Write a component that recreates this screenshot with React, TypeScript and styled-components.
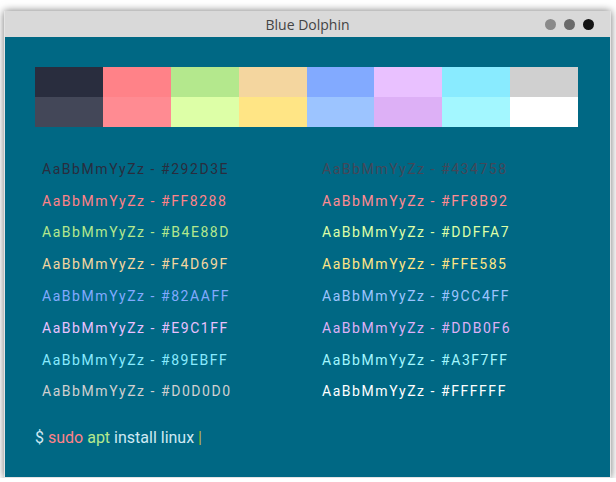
import React from 'react'
import styled, { createGlobalStyle } from 'styled-components';

const GlobalStyle = createGlobalStyle`
  body {
    margin: 0;
    background: #ffffff;
    font-family: Roboto, "Liberation Sans", sans-serif;
  }
`;

const Window = styled.div`
  margin: 11px 0 0 4px;
  width: 607px;
  height: 467px;
  display: flex;
  flex-direction: column;
  box-shadow: 0 0 8px rgba(0, 0, 0, 0.55);
  border: 1px solid #e4e4e4;
  border-top: none;
  box-sizing: border-box;
`;

const TitleBar = styled.div`
  height: 26px;
  background: #d9d9d9;
  display: flex;
  align-items: center;
  justify-content: center;
  position: relative;
  font-family: "Open Sans", "Noto Sans", sans-serif;
  font-size: 14px;
  color: #444444;
`;

const Dots = styled.div`
  position: absolute;
  right: 16px;
  top: 8px;
  display: flex;
  gap: 8px;
`;

const Dot = styled.span<{ $color: string }>`
  width: 11px;
  height: 11px;
  border-radius: 50%;
  background: ${p => p.$color};
`;

const Content = styled.div`
  flex: 1;
  background: #006884;
  padding: 30px 32px 0 30px;
`;

const Palette = styled.div`
  display: grid;
  grid-template-columns: repeat(8, 1fr);
  grid-template-rows: 30px 30px;
  width: 543px;
`;

const Swatch = styled.div<{ $color: string }>`
  background: ${p => p.$color};
`;

const Samples = styled.div`
  display: grid;
  grid-template-columns: 280px 280px;
  grid-auto-rows: 31.8px;
  margin-top: 26px;
  padding-left: 7px;
`;

const Sample = styled.div<{ $color: string }>`
  display: flex;
  align-items: center;
  color: ${p => p.$color};
  font-size: 14px;
  letter-spacing: 1.55px;
`;

const Prompt = styled.div`
  margin-top: 21px;
  font-size: 16px;
  line-height: 20px;
  color: #cfe9f3;
`;

const Word = styled.span<{ $color: string }>`
  color: ${p => p.$color};
`;

const top = ["#292D3E", "#FF8288", "#B4E88D", "#F4D69F", "#82AAFF", "#E9C1FF", "#89EBFF", "#D0D0D0"];
const bottom = ["#434758", "#FF8B92", "#DDFFA7", "#FFE585", "#9CC4FF", "#DDB0F6", "#A3F7FF", "#FFFFFF"];

export default function App() {
  return (
    <>
      <GlobalStyle />
      <Window>
        <TitleBar>
          Blue Dolphin
          <Dots>
            <Dot $color="#8a8a8a" />
            <Dot $color="#6a6a6a" />
            <Dot $color="#141414" />
          </Dots>
        </TitleBar>
        <Content>
          <Palette>
            {top.map(c => <Swatch key={'t' + c} $color={c} />)}
            {bottom.map(c => <Swatch key={'b' + c} $color={c} />)}
          </Palette>
          <Samples>
            {top.map((c, i) => (
              <React.Fragment key={c}>
                <Sample $color={c}>AaBbMmYyZz - {c}</Sample>
                <Sample $color={bottom[i]}>AaBbMmYyZz - {bottom[i]}</Sample>
              </React.Fragment>
            ))}
          </Samples>
          <Prompt>
            $ <Word $color="#FF8288">sudo</Word> <Word $color="#B4E88D">apt</Word> install linux <Word $color="#b9b633">|</Word>
          </Prompt>
        </Content>
      </Window>
    </>
  )
}
